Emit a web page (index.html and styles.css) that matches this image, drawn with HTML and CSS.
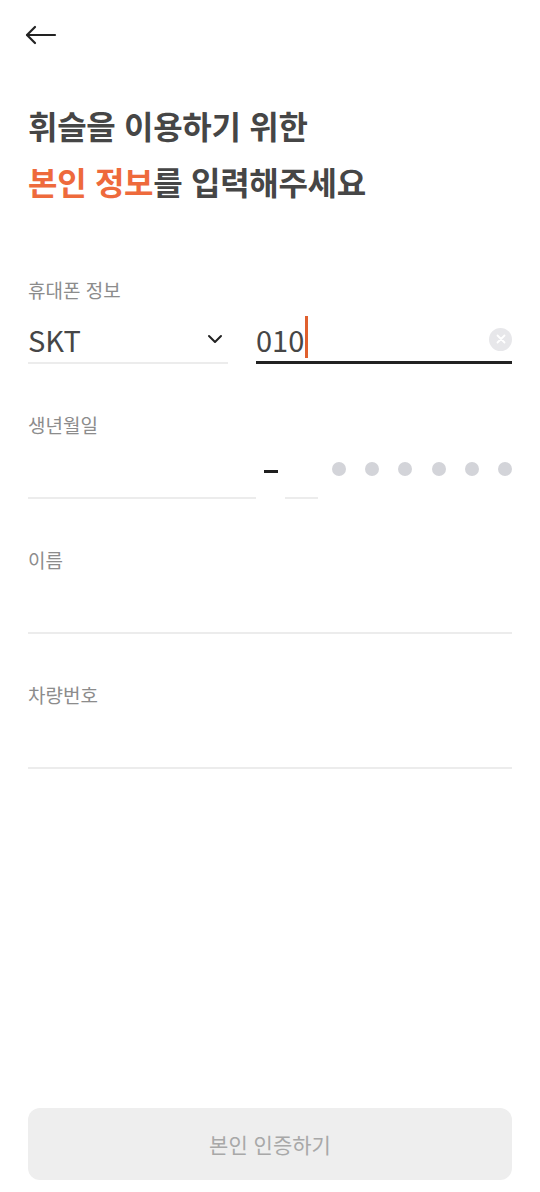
FILE: index.html
```html
<!DOCTYPE html>
<html lang="ko">
<head>
  <meta charset="UTF-8" />
  <meta name="viewport" content="width=device-width, initial-scale=1.0" />
  <title>본인 정보 입력</title>
  <link rel="stylesheet" href="styles.css">
</head>
<body>
  <header class="topbar">
    <button type="button" class="back" aria-label="뒤로가기">
      <svg width="32" height="20" viewBox="0 0 32 20" fill="none" stroke="#222" stroke-width="2.2" stroke-linecap="round" stroke-linejoin="round">
        <path d="M30 10H2.5" />
        <path d="M10 2L2 10L10 18" />
      </svg>
    </button>
  </header>

  <main class="content">
    <h1 class="title">휘슬을 이용하기 위한<br><em>본인 정보</em>를 입력해주세요</h1>

    <form class="form" onsubmit="return false;">
      <div class="field">
        <label class="field-label">휴대폰 정보</label>
        <div class="field-row">
          <div class="carrier">
            <span>SKT</span>
            <svg width="16" height="10" viewBox="0 0 16 10" fill="none" stroke="#222" stroke-width="2" stroke-linecap="round" stroke-linejoin="round">
              <path d="M2 2L8 8L14 2" />
            </svg>
          </div>
          <div class="phone-input">
            <span class="value">010</span>
            <span class="caret"></span>
            <span class="clear">
              <svg width="10" height="10" viewBox="0 0 10 10" stroke="#fff" stroke-width="1.8" stroke-linecap="round">
                <path d="M1.5 1.5L8.5 8.5M8.5 1.5L1.5 8.5" />
              </svg>
            </span>
          </div>
        </div>
      </div>

      <div class="field">
        <label class="field-label">생년월일</label>
        <div class="field-row birth-row">
          <div class="birth-input"></div>
          <span class="dash"></span>
          <div class="gender-input"></div>
          <div class="masked">
            <span></span><span></span><span></span><span></span><span></span><span></span>
          </div>
        </div>
      </div>

      <div class="field">
        <label class="field-label">이름</label>
        <div class="field-row text-input"></div>
      </div>

      <div class="field">
        <label class="field-label">차량번호</label>
        <div class="field-row text-input"></div>
      </div>
    </form>

    <button type="button" class="submit" disabled>본인 인증하기</button>
  </main>
</body>
</html>
```

FILE: styles.css
```css
:root {
  --orange: #ee6a3c;
  --text-dark: #464646;
  --label-grey: #8c8c8c;
  --line-grey: #ececec;
}
* { box-sizing: border-box; }
body {
  margin: 0;
  min-height: 100vh;
  display: flex;
  flex-direction: column;
  padding: 0 28px;
  background: #fff;
  font-family: "Noto Sans CJK KR", "Noto Sans", sans-serif;
  color: var(--text-dark);
}
.topbar {
  height: 70px;
  display: flex;
  align-items: center;
}
.back {
  margin-left: -3px;
  padding: 0;
  border: none;
  background: none;
  display: flex;
}
.content {
  flex: 1;
  display: flex;
  flex-direction: column;
}
.title {
  margin: 27px 0 69px;
  font-size: 32px;
  line-height: 56px;
  font-weight: bold;
  color: var(--text-dark);
  letter-spacing: -0.3px;
}
.title em {
  font-style: normal;
  color: var(--orange);
}
.field { margin-bottom: 49px; }
.field-label {
  display: block;
  font-size: 19px;
  line-height: 24px;
  color: var(--label-grey);
}
.field-row {
  display: flex;
  height: 62px;
}
.carrier {
  width: 200px;
  display: flex;
  align-items: center;
  justify-content: space-between;
  padding: 14px 5px 0 0;
  border-bottom: 2px solid var(--line-grey);
  font-size: 29px;
}
.phone-input {
  flex: 1;
  margin-left: 28px;
  display: flex;
  align-items: center;
  padding-top: 15px;
  border-bottom: 3px solid #222;
  font-size: 29px;
}
.caret {
  width: 3px;
  height: 42px;
  margin-left: 1px;
  margin-top: -4px;
  background: #e0602e;
}
.clear {
  margin-left: auto;
  width: 23px;
  height: 23px;
  border-radius: 50%;
  background: #e7e7ea;
  display: flex;
  align-items: center;
  justify-content: center;
}
.birth-row { align-items: flex-start; }
.birth-input {
  width: 228px;
  height: 100%;
  border-bottom: 2px solid var(--line-grey);
}
.dash {
  width: 14px;
  height: 3px;
  margin: 33px 0 0 8px;
  background: #1f1f1f;
}
.gender-input {
  width: 33px;
  height: 100%;
  margin-left: 7px;
  border-bottom: 2px solid var(--line-grey);
}
.masked {
  flex: 1;
  display: flex;
  justify-content: space-between;
  margin: 25px 0 0 14px;
}
.masked span {
  width: 14px;
  height: 14px;
  border-radius: 50%;
  background: #d3d4d9;
}
.text-input { border-bottom: 2px solid var(--line-grey); }
.submit {
  margin-top: auto;
  margin-bottom: 12px;
  width: 100%;
  height: 72px;
  border: none;
  border-radius: 12px;
  background: #eeeeee;
  color: #a8a8a8;
  font-family: inherit;
  font-size: 21px;
}
```
